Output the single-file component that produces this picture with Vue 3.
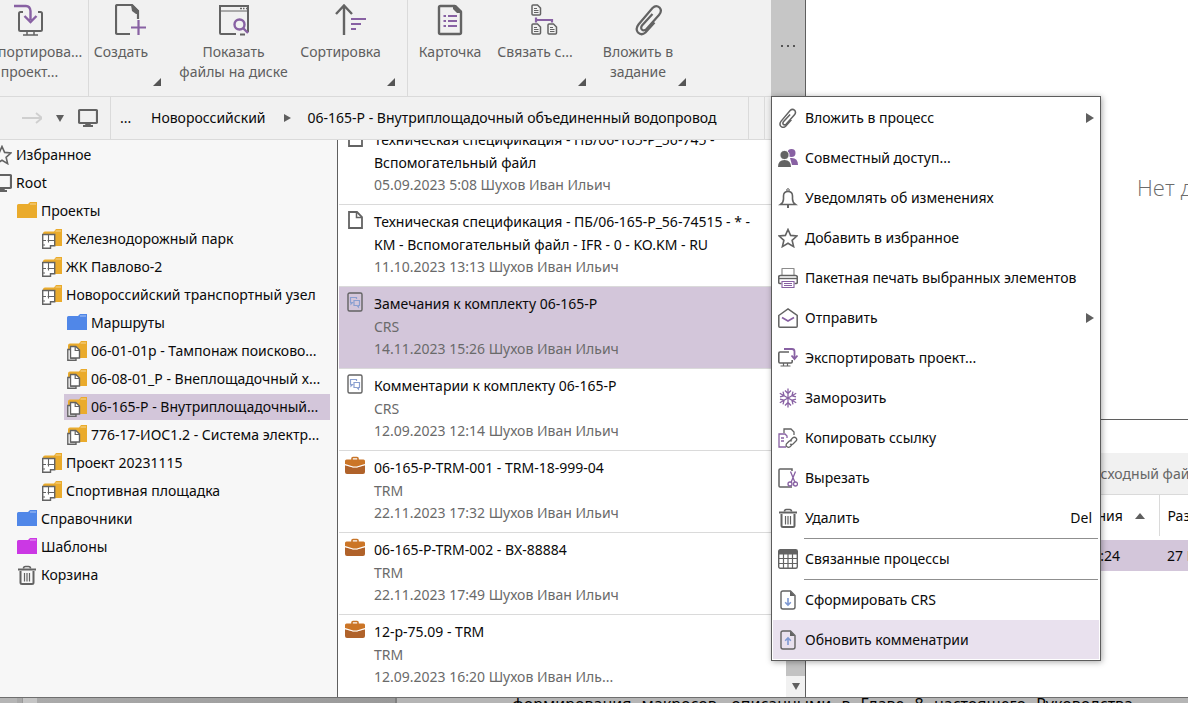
<script setup>
import { h } from 'vue'

const G = '#636363'
const P = '#8861a3'

const line = (d, color = G, width = 2, extra = {}) =>
  h('path', { d, fill: 'none', stroke: color, 'stroke-width': width, ...extra })
const solid = (d, fill = G) => h('path', { d, fill })

const folder = (fill, light) => [
  solid('M0 4.500Q0 3 1.500 3H11l2-2h7v16H0z', fill),
  line('M13 3h6', light, 1),
]
const folderSmall = () => [
  solid('M1 4.500Q1 2.500 3 2.500h9L14 0h6v17H1z', '#eaab2c'),
  line('M13.500 2h5.500', '#f6d795', 1),
]
const clip =
  'M22.500 18.500L13.500 28.500Q9.500 32 6 28.500Q3 25 6.500 20.500L20.500 4Q24 .5 27.500 3.500Q30.500 7 27 11L14.500 25Q12 27.500 9.800 25.500Q8.500 23.500 10 21.500L20.500 10'
const star = 'M10 1.500l2.600 5.900 6.300.6-4.800 4.300 1.500 6.300-5.600-3.300-5.600 3.300 1.500-6.300L1.100 8l6.300-.6z'
const trash = () => [
  line('M1 4.500h18', G, 2),
  line('M6.500 3.500q0-2 2-2h3q2 0 2 2', G, 1.6),
  line('M3.500 6v11.500q0 1.500 1.500 1.500h10q1.500 0 1.500-1.500V6', G, 2),
  line('M7.500 8v8.500M10 8v8.500M12.500 8v8.500', G, 1.2),
]
const monitor = () => [
  h('rect', { x: 1, y: 2, width: 18, height: 13, rx: 1, fill: 'none', stroke: G, 'stroke-width': 2.2 }),
  solid('M8 15h4l1 2h2v2H5v-2h2z'),
]
const briefcase = () => [
  line('M7 4V2.500q0-1 1-1h4q1 0 1 1V4', '#c87528', 1.6),
  solid('M0 5q0-1.500 1.500-1.500h17Q20 3.500 20 5v4l-10 3L0 9z', '#cb7527'),
  solid('M0 9l10 3 10-3v7q0 2-2 2H2q-2 0-2-2z', '#b0622a'),
  line('M0 8.500l8 2.500h4l8-2.500', '#fff', 1.2),
]
const crs = () => [
  h('rect', { x: 3, y: 1, width: 14, height: 18, rx: 1.5, fill: 'none', stroke: G, 'stroke-width': 1.4 }),
  line('M8.500 10.500H7.500L6 12v-1.500H5.500V5.500h6V7', '#8a9fd0', 1.2),
  line('M9 8.500h5.500v5h-1V15L12 13.500H9z', '#8a9fd0', 1.2),
]
const pageArrow = (d) => [
  line('M12.500 1H5Q3 1 3 3v14q0 2 2 2h10q2 0 2-2V5.500z', G, 1.4),
  solid('M12 1l5 5h-5z'),
  line(d, '#7d98d2', 1.6),
]
const miniDoc = (x, y) =>
  h('g', { transform: `translate(${x} ${y})` }, [
    line('M1 2q0-1 1-1h4.500l3 3v6q0 1-1 1H2q-1 0-1-1z', G, 1.5),
    line('M3 4.500h3M3 6.500h4.500M3 8.500h4.500', G, 1),
  ])

const shapes = {
  import: () => [
    line('M9 8H6.500Q5 8 5 9.500v16Q5 27 6.500 27h20q1.500 0 1.500-1.500v-16Q28 8 26.500 8H24', G),
    line('M13 28v3M20 28v3M9 31h15', G, 1.5),
    line('M0 2h12q4 0 4.500 5v9M10.500 12l6 6 6-6', P, 2.4),
  ],
  create: () => [
    line('M15 30H2.500Q1 30 1 28.500v-26Q1 1 2.500 1H17l6 6v8', G, 2.2),
    solid('M16 1h2l6 6v3h-3l-4-3z'),
    line('M16 23.500h15M23.500 16v15', P, 2.2),
  ],
  disk: () => [
    line('M18 30H3q-1 0-1-1V2h28v26', G, 2),
    line('M3 7h26', G, 1),
    line('M22 4.500h2M25 4.500h1.500M28 4.500h1', G, 1.4),
    line('M22 30.500h5', G, 2),
    h('circle', { cx: 21.5, cy: 20.5, r: 5, fill: 'none', stroke: P, 'stroke-width': 2.4 }),
    line('M25 24l5 5', P, 2.4),
  ],
  sort: () => [
    line('M9 31V2M1 10l8-8.500 8 8.500', G, 2.4),
    line('M16 15h15M16 20h10M16 25h5', P, 2.2),
  ],
  card: () => [
    line('M20.500 2H6.500Q5 2 5 3.500v25Q5 30 6.500 30h19q1.500 0 1.500-1.500V8z', G, 2.4),
    solid('M19 1h3l6 6v2h-5l-4-4z'),
    line('M9.500 12h2.500M9.500 17h2.500M9.500 22h2.500M14 12h9M14 17h9M14 22h9', P, 2),
  ],
  link: () => [
    miniDoc(2, 0), miniDoc(2, 19), miniDoc(18, 19),
    line('M7 13.500v5M7 16h16v2.500', P, 2.2),
  ],
  clip: () => [line(clip, G, 2.2)],
  clipSmall: () => [h('g', { transform: 'translate(-1 0) scale(.64)' }, [line(clip, G, 2.4)])],
  folderYellow: () => folder('#eaab2c', '#f6d795'),
  folderBlue: () => folder('#5087e8', '#a9c4f5'),
  folderPink: () => folder('#cb38e4', '#e8a2f2'),
  plan: () => [
    ...folderSmall(),
    h('path', { d: 'M.7 5.500h12v11.300H8.500v2.500H.7z', fill: '#fff', stroke: G, 'stroke-width': 1.4 }),
    line('M6.500 6v7.500M1 11.500h3M5.500 11.500h7M1 16h2', G, 1.1),
  ],
  docs: () => [
    ...folderSmall(),
    h('path', { d: 'M.8 8.500H4V17h5v2.300H.8z', fill: '#fff', stroke: G, 'stroke-width': 1.4 }),
    h('path', { d: 'M3.500 5.500h5.300L12.500 9v8H3.500z', fill: '#fff', stroke: G, 'stroke-width': 1.4 }),
    line('M8.200 5.500v4h4', G, 1.2),
  ],
  star: () => [line(star, G, 1.6)],
  trash,
  monitor,
  briefcase,
  crs,
  file: () => [line('M12 2H4v16h13V7z', G, 1.8), line('M11.500 2v5.500h5', G, 1.5)],
  people: () => [
    h('circle', { cx: 13.5, cy: 5, r: 4, fill: P }),
    solid('M12 10q8-1 8 7h-6z', P),
    h('circle', { cx: 6.5, cy: 7, r: 4.6, fill: G, stroke: '#fff', 'stroke-width': 1 }),
    solid('M0 19q0-7 6.500-7t6.500 7z'),
  ],
  bell: () => [
    h('circle', { cx: 10, cy: 2, r: 1.3, fill: 'none', stroke: G, 'stroke-width': 1 }),
    line('M2.500 16.500q3-2 3-5.500V8q0-4.500 4.500-4.500T14.500 8v3q0 3.500 3 5.500z', G, 1.6),
    line('M10 17v3', G, 2),
  ],
  printer: () => [
    line('M4 7V1q0-.5.5-.5h11q.5 0 .5.5v6', '#8c8c8c', 1.2),
    line('M3.500 15.500H2q-1.300 0-1.300-1.300v-5Q.7 7.500 2.500 7.500h15q1.800 0 1.800 1.700v5q0 1.300-1.300 1.300h-1.500', G, 1.6),
    line('M1 10.500h18', G, 1.4),
    line('M4 13.500h12v6H4zM6 15.500h8M6 17.500h8', P, 1.1),
  ],
  mail: () => [
    line('M.8 7.500L10 1l9.200 6.500v10.700q0 1-1 1H1.800q-1 0-1-1z', G, 1.5),
    line('M4 9.500l6 3.500 6-3.500', P, 1.7),
  ],
  export: () => [
    line('M11 4H2Q.8 4 .8 5.200v8.600Q.8 15 2 15h11q1.200 0 1.200-1.200V12', G, 1.6),
    line('M5.500 15v2.500M9.500 15v2.500M2.500 18h10', G, 1.2),
    line('M6 1h8q2.500 0 2.500 2.500V10M13.500 7.500l3 3.500 3-3.500', P, 1.8),
  ],
  snow: () => [
    ...[0, 60, 120, 180, 240, 300].map((a) =>
      h('g', { transform: `rotate(${a} 10 10)` }, [line('M10 10V.5M7 2.500l3 3 3-3', P, 1.3)]),
    ),
  ],
  copyLink: () => [
    line('M6 5V1h7l3 3v3', G, 1.3),
    line('M8 19H1V6h6l2 2v2M3 10h3M3 13h3', P, 1.3),
    line('M12 13l2.500-3q2-1.500 3.500 0t0 3l-3 3q-1.500 1-3 0M14 13q-2-1-3 .3l-2.500 2.500q-1 2 .5 3t3 0l2-2', G, 1.3),
  ],
  cut: () => [
    line('M14 19H2Q1 19 1 18V2q0-1 1-1h12v2', G, 1.5),
    line('M12.500 3.500l4.500 11M17.500 3.500l-4.500 11', P, 1.3),
    h('circle', { cx: 12, cy: 16, r: 2, fill: 'none', stroke: P, 'stroke-width': 1.3 }),
    h('circle', { cx: 17.5, cy: 16, r: 2, fill: 'none', stroke: P, 'stroke-width': 1.3 }),
  ],
  table: () => [
    h('rect', { x: .7, y: .7, width: 18.6, height: 18.6, rx: 1.5, fill: 'none', stroke: G, 'stroke-width': 1.4 }),
    solid('M1 1h18v4.500H1z'),
    line('M1 9.500h18M1 14.500h18M5.500 5v14M10 5v14M14.500 5v14', G, 1.2),
  ],
  pageDown: () => pageArrow('M10 8v7M7.200 12.200l2.800 3 2.800-3'),
  pageUp: () => pageArrow('M10 15V8M7.200 10.800l2.800-3 2.800 3'),
  forward: () => [line('M0 10h20M14 5l6 5-6 5', '#cfcfcf', 1.8)],
}

const Icon = (props) =>
  h('svg', { viewBox: `0 0 ${props.box || 20} ${props.box || 20}`, width: props.box || 20, height: props.box || 20, 'aria-hidden': 'true' }, shapes[props.name]())
Icon.props = ['name', 'box']

const groups = [
  [{ icon: 'import', label: 'Импортирова...\nпроект...', size: 'w118' }],
  [
    { icon: 'create', label: 'Создать', size: 'w84', more: true },
    { icon: 'disk', label: 'Показать\nфайлы на диске', size: 'w122' },
    { icon: 'sort', label: 'Сортировка', size: 'w112', more: true },
  ],
  [
    { icon: 'card', label: 'Карточка', size: 'w84' },
    { icon: 'link', label: 'Связать с...', size: 'w106', more: true },
    { icon: 'clip', label: 'Вложить в\nзадание', size: 'w100', more: true },
  ],
]

const tree = [
  { level: 0, icon: 'star', label: 'Избранное' },
  { level: 0, icon: 'monitor', label: 'Root' },
  { level: 1, icon: 'folderYellow', label: 'Проекты' },
  { level: 2, icon: 'plan', label: 'Железнодорожный парк' },
  { level: 2, icon: 'plan', label: 'ЖК Павлово-2' },
  { level: 2, icon: 'plan', label: 'Новороссийский транспортный узел' },
  { level: 3, icon: 'folderBlue', label: 'Маршруты' },
  { level: 3, icon: 'docs', label: '06-01-01р - Тампонаж поисково...' },
  { level: 3, icon: 'docs', label: '06-08-01_Р - Внеплощадочный х...' },
  { level: 3, icon: 'docs', label: '06-165-Р - Внутриплощадочный...', selected: true },
  { level: 3, icon: 'docs', label: '776-17-ИОС1.2 - Система электр...' },
  { level: 2, icon: 'plan', label: 'Проект 20231115' },
  { level: 2, icon: 'plan', label: 'Спортивная площадка' },
  { level: 1, icon: 'folderBlue', label: 'Справочники' },
  { level: 1, icon: 'folderPink', label: 'Шаблоны' },
  { level: 1, icon: 'trash', label: 'Корзина' },
]

const files = [
  { icon: 'file', lines: ['Техническая спецификация - ПБ/06-165-Р_56-745 -', 'Вспомогательный файл'], meta: '05.09.2023 5:08 Шухов Иван Ильич' },
  { icon: 'file', lines: ['Техническая спецификация - ПБ/06-165-Р_56-74515 - * -', 'КМ - Вспомогательный файл - IFR - 0 - KO.KM - RU'], meta: '11.10.2023 13:13 Шухов Иван Ильич' },
  { icon: 'crs', lines: ['Замечания к комплекту 06-165-Р'], kind: 'CRS', meta: '14.11.2023 15:26 Шухов Иван Ильич', selected: true },
  { icon: 'crs', lines: ['Комментарии к комплекту 06-165-Р'], kind: 'CRS', meta: '12.09.2023 12:14 Шухов Иван Ильич' },
  { icon: 'briefcase', lines: ['06-165-P-TRM-001 - TRM-18-999-04'], kind: 'TRM', meta: '22.11.2023 17:32 Шухов Иван Ильич' },
  { icon: 'briefcase', lines: ['06-165-P-TRM-002 - BX-88884'], kind: 'TRM', meta: '22.11.2023 17:49 Шухов Иван Ильич' },
  { icon: 'briefcase', lines: ['12-р-75.09 - TRM'], kind: 'TRM', meta: '12.09.2023 16:20 Шухов Иван Иль...' },
]

const menu = [
  { icon: 'clipSmall', label: 'Вложить в процесс', sub: true },
  { icon: 'people', label: 'Совместный доступ...' },
  { icon: 'bell', label: 'Уведомлять об изменениях' },
  { icon: 'star', label: 'Добавить в избранное' },
  { icon: 'printer', label: 'Пакетная печать выбранных элементов' },
  { icon: 'mail', label: 'Отправить', sub: true },
  { icon: 'export', label: 'Экспортировать проект...' },
  { icon: 'snow', label: 'Заморозить' },
  { icon: 'copyLink', label: 'Копировать ссылку' },
  { icon: 'cut', label: 'Вырезать' },
  { icon: 'trash', label: 'Удалить', key: 'Del' },
  { icon: 'table', label: 'Связанные процессы', divided: true },
  { icon: 'pageDown', label: 'Сформировать CRS', divided: true },
  { icon: 'pageUp', label: 'Обновить комменатрии', active: true },
]
</script>

<template>
  <div class="screen">
    <div class="window">
      <section class="browser">
        <header class="ribbon">
          <div class="groups">
            <div v-for="(group, i) in groups" :key="i" class="group">
              <button v-for="item in group" :key="item.label" type="button" class="tool" :class="[item.size, { more: item.more }]">
                <Icon :name="item.icon" :box="32" />
                <span class="tool-label">{{ item.label }}</span>
                <i v-if="item.more" class="corner"></i>
              </button>
            </div>
          </div>
          <div class="overflow">
            <button type="button" class="overflow-button" aria-label="Ещё">
              <i></i><i></i><i></i>
            </button>
            <div class="menu" role="menu">
              <button
                v-for="item in menu"
                :key="item.label"
                type="button"
                role="menuitem"
                class="menu-item"
                :class="{ active: item.active, divided: item.divided }"
              >
                <Icon :name="item.icon" />
                <span class="menu-label">{{ item.label }}</span>
                <kbd v-if="item.key">{{ item.key }}</kbd>
                <i v-if="item.sub" class="tri right"></i>
              </button>
            </div>
          </div>
        </header>

        <nav class="address">
          <div class="history">
            <button type="button" aria-label="Вперёд"><Icon name="forward" /></button>
            <button type="button" aria-label="История"><i class="tri down"></i></button>
            <button type="button" aria-label="Root"><Icon name="monitor" /></button>
          </div>
          <div class="crumbs">
            <button type="button">...</button>
            <button type="button">Новороссийский</button>
            <i class="tri right"></i>
            <button type="button">06-165-Р - Внутриплощадочный объединенный водопровод</button>
          </div>
          <div class="address-end"></div>
        </nav>

        <div class="content">
          <ul class="tree">
            <li v-for="node in tree" :key="node.label" :class="['level' + node.level]">
              <button type="button" class="node" :class="{ selected: node.selected }">
                <Icon :name="node.icon" /><span>{{ node.label }}</span>
              </button>
            </li>
          </ul>
          <div class="list">
            <ul class="files">
              <li v-for="file in files" :key="file.meta" class="file" :class="{ selected: file.selected }">
                <Icon :name="file.icon" />
                <div class="file-text">
                  <p v-for="text in file.lines" :key="text">{{ text }}</p>
                  <p v-if="file.kind" class="muted">{{ file.kind }}</p>
                  <p class="muted meta">{{ file.meta }}</p>
                </div>
              </li>
            </ul>
            <div class="scrollbar">
              <div class="thumb"></div>
              <button type="button" aria-label="Вниз"><i class="tri down"></i></button>
            </div>
          </div>
        </div>
      </section>

      <section class="details">
        <div class="preview"><span>Нет данных</span></div>
        <div class="files-panel">
          <div class="tabs"><button type="button">Исходный файл</button></div>
          <table>
            <thead>
              <tr>
                <th class="date">Дата изменения <i class="tri up"></i></th>
                <th>Размер</th>
              </tr>
            </thead>
            <tbody>
              <tr>
                <td class="date">14.11.2023 15:24</td>
                <td>27 КБ</td>
              </tr>
            </tbody>
          </table>
        </div>
      </section>
    </div>

    <footer class="behind">
      <i class="rail"></i><i class="knob"></i><i class="shade"></i>
      <p>формирования макросов, описанными в Главе 8 настоящего Руководства</p>
    </footer>
  </div>
</template>

<style>
html, body { overflow: hidden; background: #fff; }
</style>

<style scoped>
* { box-sizing: border-box; }
.screen {
  display: flex;
  flex-direction: column;
  height: 100vh;
  overflow: hidden;
  color: #0a0a0a;
  font: 14px/20px "Noto Sans", "Open Sans", sans-serif;
}
button {
  margin: 0; padding: 0; border: 0; background: none;
  color: inherit; font: inherit; text-align: left; white-space: nowrap;
}
ul, p { margin: 0; padding: 0; list-style: none; }
svg { flex: none; display: block; }
.window { flex: 1; min-height: 0; display: flex; border-bottom: 1px solid #6f6f6f; background: #fff; }
.browser {
  flex: none; width: 806px; min-height: 0;
  display: flex; flex-direction: column;
  border-right: 1px solid #5f5f5f; background: #f1f1f1;
}

.ribbon { display: flex; height: 97px; }
.groups { flex: 1; min-width: 0; display: flex; overflow: hidden; border-bottom: 1px solid #dadada; }
.group { flex: none; display: flex; border-right: 1px solid #dadada; }
.group:first-child { margin-left: -29px; }
.group:last-child { border-right: 0; }
.tool {
  position: relative; display: flex; flex-direction: column; align-items: center;
  gap: 6px; padding-top: 4px; color: #5f5f5f;
}
.tool-label { white-space: pre; text-align: center; }
.more .tool-label { margin-right: 20px; }
.w84 { width: 84px; }
.w100 { width: 100px; }
.w106 { width: 106px; }
.w112 { width: 113px; }
.w118 { width: 117px; }
.w122 { width: 121px; }
.corner {
  position: absolute; right: 12px; bottom: 10px;
  border-left: 8px solid transparent; border-bottom: 8px solid #555;
}
.overflow { position: relative; flex: none; width: 34px; }
.overflow-button {
  display: flex; align-items: center; justify-content: center; gap: 4px;
  width: 100%; height: 100%; padding-bottom: 5px; background: #c6c6c6;
}
.overflow-button i { width: 2px; height: 2px; background: #555; }

.menu {
  position: absolute; z-index: 2; left: 0; top: 96px; width: 330px;
  padding: 1px; border: 1px solid #5c5c5c; background: #fff;
  box-shadow: 1px 1px 6px rgba(0, 0, 0, .35);
}
.menu-item {
  position: relative; display: flex; align-items: center; gap: 7px;
  width: 100%; height: 40px; padding: 0 5px;
}
.menu-item.divided { height: 41px; padding-top: 1px; }
.menu-item.divided::before {
  content: ""; position: absolute; left: 31px; right: 1px; top: 0; border-top: 1px solid #8f8f8f;
}
.menu-item.active { height: 39px; background: #e9e1ee; }
.menu-label { flex: 1; }
kbd { padding-right: 2px; font: inherit; }

.tri { flex: none; width: 0; height: 0; }
.tri.right { border: 5px solid transparent; border-left: 8px solid #5f5f5f; border-right: 0; }
.tri.down { border: 4px solid transparent; border-top: 7px solid #5f5f5f; border-bottom: 0; }
.tri.up { border: 5px solid transparent; border-bottom: 6px solid #5f5f5f; border-top: 0; }

.address { display: flex; height: 43px; border-bottom: 1px solid #dadada; }
.history { flex: none; width: 111px; padding-left: 22px; display: flex; align-items: center; gap: 14px; border-right: 1px solid #dadada; }
.history button { display: flex; align-items: center; }
.crumbs { flex: none; width: 638px; padding-left: 9px; display: flex; align-items: center; border-right: 1px solid #dadada; }
.crumbs button:first-child { width: 31px; }
.crumbs .tri { margin: 0 17px 0 18px; border-width: 4px 0 4px 7px; }
.address-end { width: 16px; border-right: 1px solid #dadada; }

.content { flex: 1; min-height: 0; display: flex; }
.tree { flex: none; width: 338px; padding: 1px 7px 0 0; overflow: hidden; background: #f7f7f7; border-right: 1px solid #5f5f5f; }
.tree li { height: 28px; padding: 1px 0; }
.level0 { margin-left: -11px; }
.level1 { margin-left: 14px; }
.level2 { margin-left: 39px; }
.level3 { margin-left: 64px; }
.node { display: flex; align-items: center; gap: 4px; width: 100%; height: 26px; padding-left: 3px; overflow: hidden; }
.selected { background: #d3c6da; }

.list { flex: 1; min-width: 0; display: flex; padding-left: 1px; overflow: hidden; background: #fff; }
.files { flex: 1; min-width: 0; margin-top: -17px; }
.file { display: flex; gap: 9px; height: 82px; padding: 5px 0 0 6px; border-bottom: 1px solid #dadada; white-space: nowrap; }
.file:last-child { border-bottom: 0; }
.file-text p { line-height: 23px; }
.file-text .meta { line-height: 21px; }
.muted { color: #6a6a6a; }
.scrollbar { flex: none; width: 19px; display: flex; flex-direction: column; background: #f1f1f1; }
.thumb { flex: 1; background: #c2c2c2; }
.scrollbar button { display: flex; align-items: center; justify-content: center; height: 21px; }

.details { flex: 1; min-width: 0; display: flex; flex-direction: column; overflow: hidden; }
.preview {
  flex: none; height: 420px; padding: 170px 0 0 331px; overflow: hidden; white-space: nowrap;
  border-bottom: 1px solid #5f5f5f; color: #6b6b6b; font: 300 22px/34px "Open Sans", "Noto Sans", sans-serif;
}
.files-panel { flex: 1; padding-top: 33px; }
.tabs { display: flex; height: 42px; padding-left: 284px; align-items: center; background: #f1f1f1; border-bottom: 1px solid #dadada; color: #666; }
table { width: 100%; table-layout: fixed; border-collapse: collapse; white-space: nowrap; }
th, td { padding: 0 0 0 8px; overflow: hidden; font-weight: 400; text-align: left; }
th { height: 43px; border-bottom: 4px solid #fff; }
td { height: 33px; background: #d3c6da; }
.date { width: 353px; padding-right: 39px; text-align: right; }
th.date { padding-right: 14px; border-right: 1px solid #dadada; }
th .tri { display: inline-block; margin-left: 8px; vertical-align: 2px; }

.behind { flex: none; display: flex; height: 5px; overflow: hidden; background: #b5b5b5; color: #000; }
.behind i { flex: none; }
.rail { width: 23px; border-left: 17px solid #b5b5b5; border-right: 1px solid #999; background: #a9a9a9; }
.knob { width: 14px; background: #c5c5c5; }
.shade { width: 360px; background: linear-gradient(90deg, #aaa, #999); border-right: 2px solid #808080; }
.behind p { flex: none; width: 621px; margin-left: 115px; font: 16px/13px "Noto Sans", sans-serif; text-align-last: justify; }
</style>
